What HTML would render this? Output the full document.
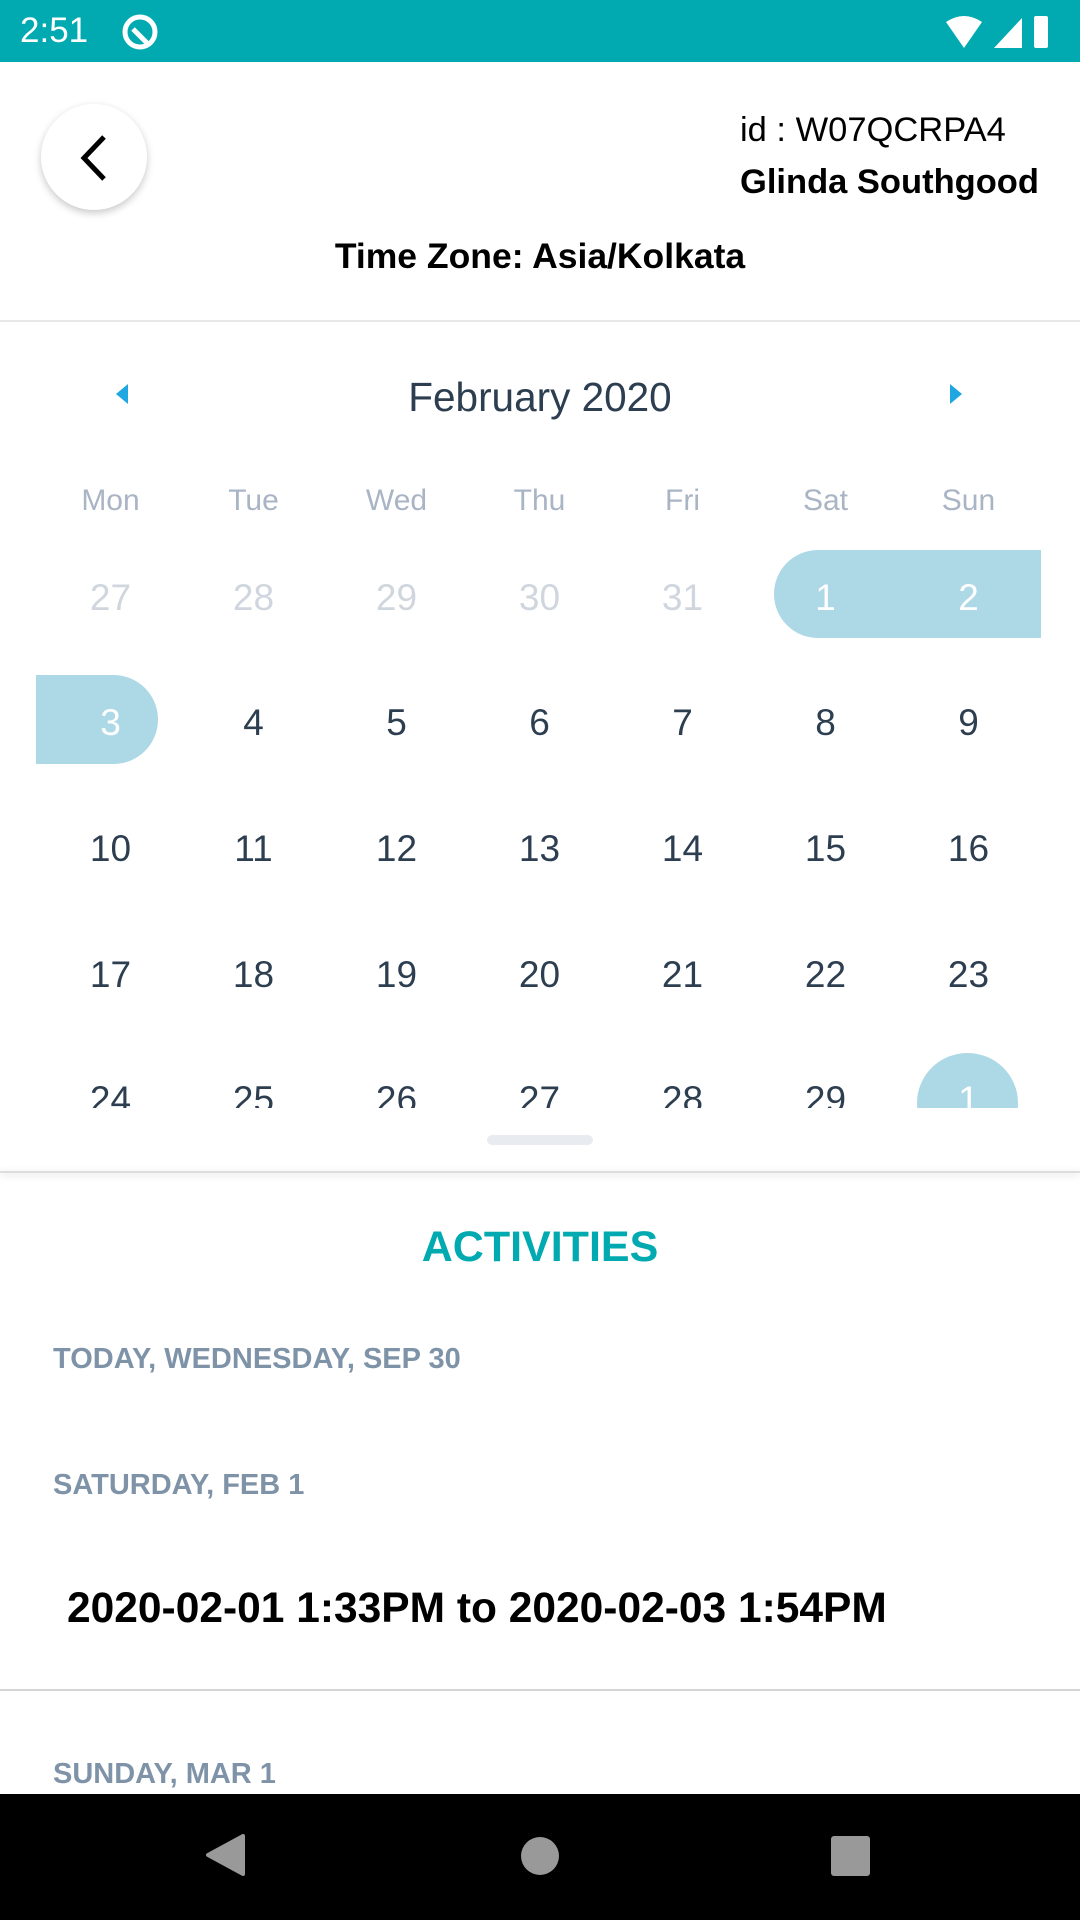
<!DOCTYPE html>
<html><head><meta charset="utf-8"><style>
*{margin:0;padding:0;box-sizing:border-box}
body{width:1080px;height:1920px;position:relative;overflow:hidden;background:#fff;font-family:"Liberation Sans",sans-serif}
.a{position:absolute}
.c{text-align:center}
.num{position:absolute;width:143px;text-align:center;font-size:37px;line-height:40px;color:#2c3e50}
.wd{position:absolute;width:143px;text-align:center;font-size:30px;line-height:34px;color:#a9b4c4;top:484px}
.g{color:#d0d6de}
.w{color:#fff}
.h{position:absolute;font-size:29px;font-weight:bold;color:#7f93a8;left:53px;line-height:32px}
</style></head><body>
<div class="a" style="left:0;top:0;width:1080px;height:62px;background:#00aab0"></div>
<div class="a" style="left:20px;top:12px;font-size:35px;color:#fff;line-height:38px">2:51</div>
<svg class="a" style="left:120px;top:12px" width="40" height="40" viewBox="0 0 40 40"><circle cx="20" cy="20" r="15" fill="none" stroke="#fff" stroke-width="5"/><path d="M13 17 L27 31" stroke="#fff" stroke-width="5"/></svg>
<svg class="a" style="left:940px;top:12px" width="110" height="40" viewBox="0 0 110 40"><path d="M6 10 Q24 -2 42 10 L24 36 Z" fill="#fff"/><path d="M54 36 L82 6 L82 36 Z" fill="#fff"/><rect x="100" y="4" width="14" height="32" rx="2" fill="#fff" transform="translate(-6 0)"/></svg>
<div class="a" style="left:41px;top:104px;width:106px;height:106px;border-radius:50%;background:#fff;box-shadow:0 3px 8px rgba(0,0,0,.22)"></div>
<svg class="a" style="left:74px;top:134px" width="40" height="48" viewBox="0 0 40 48"><path d="M30 3 L10 24 L30 45" fill="none" stroke="#000" stroke-width="5"/></svg>
<div class="a" style="left:740px;top:112px;font-size:34.5px;line-height:36px;color:#000">id : W07QCRPA4</div>
<div class="a" style="left:740px;top:164px;font-size:34.5px;line-height:36px;color:#000;font-weight:bold">Glinda Southgood</div>
<div class="a c" style="left:0;width:1080px;top:237px;font-size:35.5px;line-height:38px;font-weight:bold;color:#000">Time Zone: Asia/Kolkata</div>
<div class="a" style="left:0;top:320px;width:1080px;height:2px;background:#e8e8e8"></div>
<svg class="a" style="left:114px;top:382px" width="16" height="24"><path d="M14 2 L2 12 L14 22Z" fill="#1ea7e0"/></svg>
<svg class="a" style="left:948px;top:382px" width="16" height="24"><path d="M2 2 L14 12 L2 22Z" fill="#1ea7e0"/></svg>
<div class="a c" style="left:0;width:1080px;top:375px;font-size:40.5px;line-height:44px;color:#2c3e50">February 2020</div>
<div class="wd" style="left:39px">Mon</div><div class="wd" style="left:182px">Tue</div><div class="wd" style="left:325px">Wed</div><div class="wd" style="left:468px">Thu</div><div class="wd" style="left:611px">Fri</div><div class="wd" style="left:754px">Sat</div><div class="wd" style="left:897px">Sun</div>
<div class="a" style="left:774px;top:550px;width:267px;height:88px;background:#add8e6;border-radius:44px 0 0 44px"></div>
<div class="a" style="left:36px;top:675px;width:122px;height:89px;background:#add8e6;border-radius:0 45px 45px 0"></div>
<div class="a" style="left:0;top:0;width:1080px;height:1108px;overflow:hidden">
<div class="a" style="left:917px;top:1053px;width:101px;height:100px;background:#add8e6;border-radius:50%"></div>
<div class="num g" style="left:39px;top:578px">27</div><div class="num g" style="left:182px;top:578px">28</div><div class="num g" style="left:325px;top:578px">29</div><div class="num g" style="left:468px;top:578px">30</div><div class="num g" style="left:611px;top:578px">31</div><div class="num w" style="left:754px;top:578px">1</div><div class="num w" style="left:897px;top:578px">2</div>
<div class="num w" style="left:39px;top:703px">3</div><div class="num" style="left:182px;top:703px">4</div><div class="num" style="left:325px;top:703px">5</div><div class="num" style="left:468px;top:703px">6</div><div class="num" style="left:611px;top:703px">7</div><div class="num" style="left:754px;top:703px">8</div><div class="num" style="left:897px;top:703px">9</div>
<div class="num" style="left:39px;top:829px">10</div><div class="num" style="left:182px;top:829px">11</div><div class="num" style="left:325px;top:829px">12</div><div class="num" style="left:468px;top:829px">13</div><div class="num" style="left:611px;top:829px">14</div><div class="num" style="left:754px;top:829px">15</div><div class="num" style="left:897px;top:829px">16</div>
<div class="num" style="left:39px;top:955px">17</div><div class="num" style="left:182px;top:955px">18</div><div class="num" style="left:325px;top:955px">19</div><div class="num" style="left:468px;top:955px">20</div><div class="num" style="left:611px;top:955px">21</div><div class="num" style="left:754px;top:955px">22</div><div class="num" style="left:897px;top:955px">23</div>
<div class="num" style="left:39px;top:1080px">24</div><div class="num" style="left:182px;top:1080px">25</div><div class="num" style="left:325px;top:1080px">26</div><div class="num" style="left:468px;top:1080px">27</div><div class="num" style="left:611px;top:1080px">28</div><div class="num" style="left:754px;top:1080px">29</div><div class="num w" style="left:897px;top:1080px">1</div>
</div>
<div class="a" style="left:487px;top:1135px;width:106px;height:10px;border-radius:5px;background:#e8ebf0"></div>
<div class="a" style="left:0;top:1171px;width:1080px;height:2px;background:#ddd;box-shadow:0 2px 8px rgba(0,0,0,.2)"></div>
<div class="a c" style="left:0;width:1080px;top:1224px;font-size:43px;line-height:46px;font-weight:bold;color:#00aab0">ACTIVITIES</div>
<div class="h" style="top:1343px">TODAY, WEDNESDAY, SEP 30</div>
<div class="h" style="top:1469px">SATURDAY, FEB 1</div>
<div class="a" style="left:67px;top:1586px;font-size:42.5px;line-height:46px;font-weight:bold;color:#000">2020-02-01 1:33PM to 2020-02-03 1:54PM</div>
<div class="a" style="left:0;top:1689px;width:1080px;height:2px;background:#d5d5d5"></div>
<div class="h" style="top:1758px">SUNDAY, MAR 1</div>
<div class="a" style="left:0;top:1794px;width:1080px;height:126px;background:#000"></div>
<svg class="a" style="left:0;top:1794px" width="1080" height="126"><path d="M243 42 L243 80 L208 61 Z" fill="#999" stroke="#999" stroke-width="4" stroke-linejoin="round"/><circle cx="540" cy="62" r="19" fill="#999"/><rect x="831" y="42" width="39" height="40" rx="3" fill="#999"/></svg>
</body></html>
